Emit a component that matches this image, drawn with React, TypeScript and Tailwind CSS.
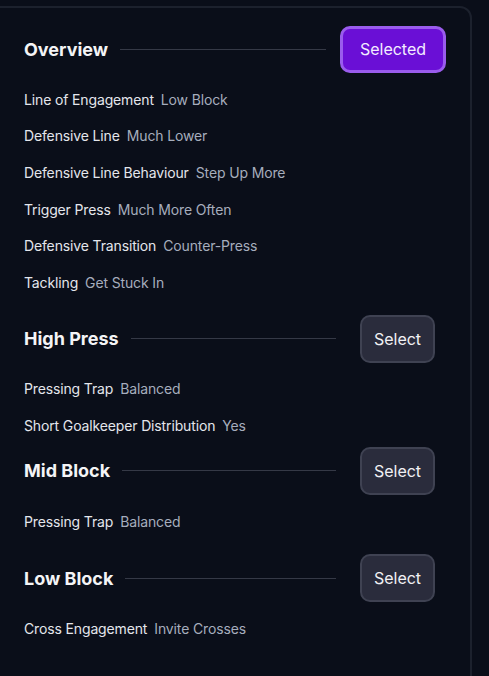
import React from "react";

type Row = { label: string; value: string };

type Section = {
  title: string;
  selected?: boolean;
  rows: Row[];
  gapTop: string;
  listGap: string;
};

const sections: Section[] = [
  {
    title: "Overview",
    selected: true,
    gapTop: "mt-0",
    listGap: "mt-[8px]",
    rows: [
      { label: "Line of Engagement", value: "Low Block" },
      { label: "Defensive Line", value: "Much Lower" },
      { label: "Defensive Line Behaviour", value: "Step Up More" },
      { label: "Trigger Press", value: "Much More Often" },
      { label: "Defensive Transition", value: "Counter-Press" },
      { label: "Tackling", value: "Get Stuck In" },
    ],
  },
  {
    title: "High Press",
    gapTop: "mt-[14px]",
    listGap: "mt-[8px]",
    rows: [
      { label: "Pressing Trap", value: "Balanced" },
      { label: "Short Goalkeeper Distribution", value: "Yes" },
    ],
  },
  {
    title: "Mid Block",
    gapTop: "mt-[3px]",
    listGap: "mt-[8px]",
    rows: [{ label: "Pressing Trap", value: "Balanced" }],
  },
  {
    title: "Low Block",
    gapTop: "mt-[15px]",
    listGap: "mt-[8px]",
    rows: [{ label: "Cross Engagement", value: "Invite Crosses" }],
  },
];

function SectionBlock({ s }: { s: Section }) {
  return (
    <div className={s.gapTop}>
      <div className="flex items-center h-12">
        <h3 className="text-[18px] font-bold text-[#f4f4f6] whitespace-nowrap">{s.title}</h3>
        <div className="flex-1 h-px bg-[#353946] ml-3" />
        {s.selected ? (
          <button className="ml-3.5 mr-[-11px] h-[47px] w-[106px] rounded-[10px] bg-[#6a0fd6] border-[3px] border-[#9a5ced] text-[16px] text-[#f3ecff]">
            Selected
          </button>
        ) : (
          <button className="ml-6 h-12 w-[75px] rounded-[10px] bg-[#2a2c3c] border-2 border-[#3f4252] text-[16px] text-[#f1f1f4]">
            Select
          </button>
        )}
      </div>
      <div className={s.listGap}>
        {s.rows.map((r) => (
          <div key={r.label} className="h-[36.6px] flex items-center text-[14px] tracking-[-0.01em] whitespace-nowrap">
            <span className="text-[#e4e6ec]">{r.label}</span>
            <span className="ml-[7px] text-[#a6adbd]">{r.value}</span>
          </div>
        ))}
      </div>
    </div>
  );
}

export default function App() {
  return (
    <div
      className="w-[489px] h-[676px] overflow-hidden bg-[#0a0e19] pt-1.5 pr-[17px]"
      style={{ fontFamily: "Inter, 'Noto Sans', sans-serif" }}
    >
      <div className="-ml-3 h-[700px] rounded-xl border-2 border-[#1c212d] bg-[#0a0e19] pt-[17px] pl-[34px] pr-[35px]">
        {sections.map((s) => (
          <SectionBlock key={s.title} s={s} />
        ))}
      </div>
    </div>
  );
}
